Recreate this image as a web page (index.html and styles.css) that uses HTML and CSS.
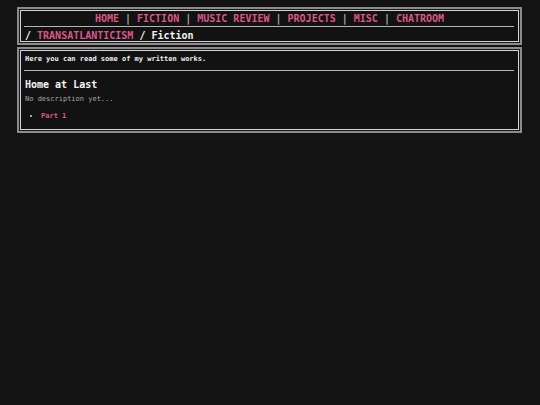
FILE: index.html
```html
<!DOCTYPE html>
<html>
<head>
<meta charset="utf-8">
<link rel="stylesheet" href="styles.css">
</head>
<body>
<div class="wrap">
  <header class="box head">
    <nav class="nav">
      <a href="#">HOME</a> | <a href="#">FICTION</a> | <a href="#">MUSIC REVIEW</a> | <a href="#">PROJECTS</a> | <a href="#">MISC</a> | <a href="#">CHATROOM</a>
    </nav>
    <hr class="rule">
    <div class="crumb">/ <a href="#">TRANSATLANTICISM</a> / Fiction</div>
  </header>
  <main class="box body">
    <p class="intro">Here you can read some of my written works.</p>
    <hr class="rule">
    <h2 class="title">Home at Last</h2>
    <p class="desc">No description yet...</p>
    <ul class="parts">
      <li><a href="#">Part 1</a></li>
    </ul>
  </main>
</div>
</body>
</html>
```

FILE: styles.css
```css
html, body {
  margin: 0;
  padding: 0;
  background: #131313;
}
body {
  font-family: "DejaVu Sans Mono", "Liberation Mono", monospace;
  color: #e8e8e8;
}
.wrap {
  margin: 7px 18px 0 17px;
  display: flex;
  flex-direction: column;
  gap: 2px;
}
.box {
  border: 2px solid #8c8c8c;
  box-shadow: inset 0 0 0 1px #1a1a1a, inset 0 0 0 2px #d4d4d4;
  background: #121212;
  padding: 0 6px;
}
a {
  color: #dc5787;
  text-decoration: none;
  font-weight: bold;
}
.nav {
  text-align: center;
  font-size: 10px;
  font-weight: bold;
  line-height: 14px;
  color: #a8a8a8;
  padding-top: 3px;
  height: 14px;
}
.rule {
  border: 0;
  border-top: 1px solid #b5b5b5;
  margin: 0 0 0 -1px;
  height: 0;
}
.crumb {
  font-size: 10px;
  font-weight: bold;
  line-height: 14px;
  padding-top: 2px;
  height: 14px;
  color: #f2f2f2;
}
.body {
  padding-top: 6px;
  padding-bottom: 10px;
}
.intro {
  margin: 0 0 6px;
  font-size: 7px;
  line-height: 9px;
  font-weight: bold;
  color: #f0f0f0;
}
.title {
  margin: 8px 0 0;
  font-size: 10px;
  line-height: 12px;
  font-weight: bold;
  color: #f4f4f4;
}
.desc {
  margin: 4px 0 0;
  font-size: 7px;
  line-height: 9px;
  color: #a8a8a8;
}
.parts {
  margin: 8px 0 0;
  padding-left: 16px;
  font-size: 7px;
  line-height: 9px;
  color: #cfcfcf;
}
```
